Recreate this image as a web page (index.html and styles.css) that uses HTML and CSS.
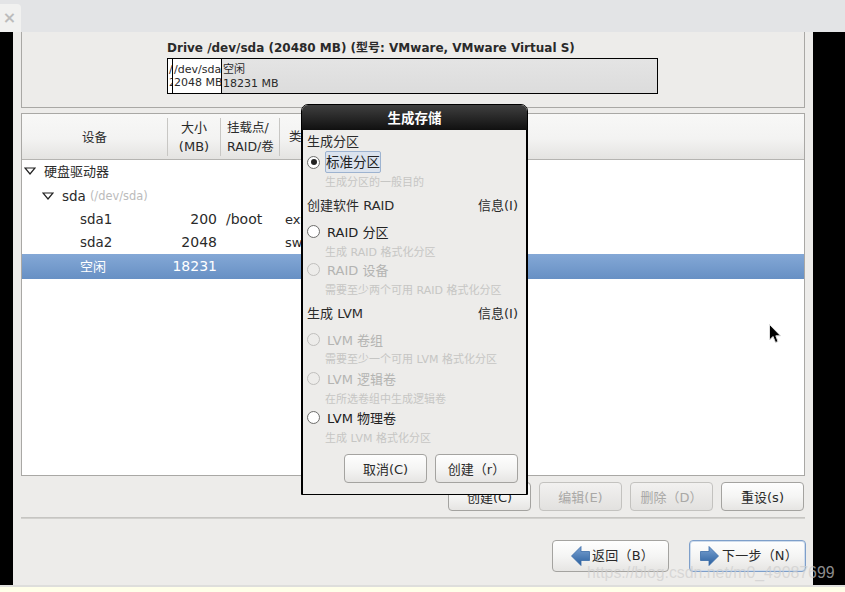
FILE: index.html
```html
<!DOCTYPE html>
<html lang="zh-CN">

<head>
    <meta charset="UTF-8">
    <title>生成存储</title>
    <link rel="stylesheet" href="styles.css">
</head>

<body>
    <div class="topbar">
        <div class="tab">×</div>
    </div>

    <div class="screen">
        <div class="side-left"></div>

        <div class="installer">
            <div class="drive-panel">
                <div class="drive-title">Drive /dev/sda (20480 MB) (型号: VMware, VMware Virtual S)</div>
                <div class="disk-bar">
                    <div class="seg seg-boot">/boot<br>200 MB</div>
                    <div class="seg seg-swap">/dev/sda2<br>2048 MB</div>
                    <div class="seg seg-free">空闲<br>18231 MB</div>
                </div>
            </div>

            <div class="tree-panel">
                <div class="tree-head">
                    <div class="col-title col-device">设备</div>
                    <div class="col-title col-size">大小<br>(MB)</div>
                    <div class="col-title col-mount">挂载点/<br>RAID/卷</div>
                    <div class="col-title col-type">类型</div>
                </div>
                <div class="tree-row">
                    <div class="name level-0">
                        <svg class="expander" width="12" height="8" viewBox="0 0 12 8"><path d="M1 1 H11 L6 7 Z" fill="#fff" stroke="#222" stroke-width="1.2"/></svg>
                        硬盘驱动器
                    </div>
                </div>
                <div class="tree-row">
                    <div class="name level-1">
                        <svg class="expander" width="12" height="8" viewBox="0 0 12 8"><path d="M1 1 H11 L6 7 Z" fill="#fff" stroke="#222" stroke-width="1.2"/></svg>
                        sda <span class="dev-path">(/dev/sda)</span>
                    </div>
                </div>
                <div class="tree-row shift-down">
                    <div class="name level-2">sda1</div>
                    <div class="size">200</div>
                    <div class="mount">/boot</div>
                    <div class="type">ext4</div>
                </div>
                <div class="tree-row">
                    <div class="name level-2">sda2</div>
                    <div class="size">2048</div>
                    <div class="mount"></div>
                    <div class="type">swap</div>
                </div>
                <div class="tree-row selected">
                    <div class="name level-2">空闲</div>
                    <div class="size">18231</div>
                </div>
            </div>

            <div class="action-row">
                <button class="btn">创建(C)</button>
                <button class="btn" disabled>编辑(E)</button>
                <button class="btn" disabled>删除（D）</button>
                <button class="btn">重设(s)</button>
            </div>

            <div class="separator"></div>

            <div class="nav-row">
                <button class="btn nav-btn">
                    <svg width="19" height="20" viewBox="0 0 19 20"><defs><linearGradient id="arrowBack" x1="0" y1="0" x2="0" y2="1"><stop offset="0" stop-color="#7ba3d3"/><stop offset="1" stop-color="#2a5f9e"/></linearGradient></defs><path d="M0.5 10 L10 0.5 V5.5 H18.5 V14.5 H10 V19.5 Z" fill="url(#arrowBack)" stroke="#3a6ca8" stroke-width="0.8"/></svg>
                    返回（B）
                </button>
                <button class="btn nav-btn focused">
                    <svg width="19" height="20" viewBox="0 0 19 20"><defs><linearGradient id="arrowNext" x1="0" y1="0" x2="0" y2="1"><stop offset="0" stop-color="#7ba3d3"/><stop offset="1" stop-color="#2a5f9e"/></linearGradient></defs><path d="M18.5 10 L9 0.5 V5.5 H0.5 V14.5 H9 V19.5 Z" fill="url(#arrowNext)" stroke="#3a6ca8" stroke-width="0.8"/></svg>
                    下一步（N）
                </button>
            </div>
        </div>

        <div class="side-right"></div>
    </div>

    <div class="bottom-strip"></div>

    <!-- 對話框 -->
    <div class="dialog">
        <div class="dialog-title">生成存储</div>
        <div class="dialog-body">
            <div class="group-label first">生成分区</div>
            <div class="option">
                <span class="radio checked"></span>
                <span class="option-text focus-box">标准分区</span>
            </div>
            <div class="hint short">生成分区的一般目的</div>

            <div class="group-label"><span>创建软件 RAID</span><span>信息(I)</span></div>
            <div class="option">
                <span class="radio"></span>
                <span class="option-text">RAID 分区</span>
            </div>
            <div class="hint">生成 RAID 格式化分区</div>
            <div class="option off">
                <span class="radio"></span>
                <span class="option-text">RAID 设备</span>
            </div>
            <div class="hint">需要至少两个可用 RAID 格式化分区</div>

            <div class="group-label"><span>生成 LVM</span><span>信息(I)</span></div>
            <div class="option off">
                <span class="radio"></span>
                <span class="option-text">LVM 卷组</span>
            </div>
            <div class="hint tall">需要至少一个可用 LVM 格式化分区</div>
            <div class="option off">
                <span class="radio"></span>
                <span class="option-text">LVM 逻辑卷</span>
            </div>
            <div class="hint tall low">在所选卷组中生成逻辑卷</div>
            <div class="option">
                <span class="radio"></span>
                <span class="option-text">LVM 物理卷</span>
            </div>
            <div class="hint tall low">生成 LVM 格式化分区</div>

            <div class="dialog-buttons">
                <button class="btn">取消(C)</button>
                <button class="btn">创建（r）</button>
            </div>
        </div>
    </div>

    <svg class="cursor" width="14" height="22" viewBox="0 0 14 22"><path d="M1.5 1.5 V17 L5 13.5 L7.5 19.5 L10 18.5 L7.8 12.8 H12.5 Z" fill="#000" stroke="#ddd" stroke-width="1"/></svg>

    <div class="watermark">https://blog.csdn.net/m0_49087699</div>
</body>

</html>
```

FILE: styles.css
```css
* {
    box-sizing: border-box;
}

body {
    margin: 0;
    width: 845px;
    height: 592px;
    position: relative;
    overflow: hidden;
    display: flex;
    flex-direction: column;
    font-family: "DejaVu Sans", "Noto Sans CJK SC", sans-serif;
    font-size: 13px;
    color: #2a2a2a;
    background-color: #edecea;
}

.topbar {
    height: 32px;
    flex: none;
    background-color: #e3e4e6;
    padding-top: 4px;
}

.tab {
    width: 21px;
    height: 28px;
    background-color: #f1f1f0;
    border-top-right-radius: 4px;
    color: #bcbcbc;
    font-size: 16px;
    font-weight: bold;
    line-height: 28px;
    text-align: center;
    padding-right: 2px;
}

.screen {
    height: 553px;
    flex: none;
    display: flex;
}

.side-left {
    width: 13px;
    background-color: #000;
}

.side-right {
    width: 32px;
    background-color: #000;
}

.installer {
    width: 800px;
    padding: 0 8px;
    background-color: #edecea;
}

.drive-panel {
    height: 76px;
    border: 1px solid #a9a8a5;
    border-top: none;
    padding: 8px 0 0 145px;
}

.drive-title {
    font-size: 12px;
    font-weight: bold;
    line-height: 16px;
    height: 18px;
}

.disk-bar {
    width: 491px;
    height: 36px;
    display: flex;
    border: 1px solid #000;
    font-size: 11px;
    line-height: 13px;
}

.seg {
    overflow: hidden;
    white-space: nowrap;
    border-right: 1px solid #000;
    padding-top: 4px;
}

.seg-boot {
    width: 5px;
    flex: none;
    padding-left: 1px;
    background-color: #fff;
}

.seg-swap {
    width: 49px;
    flex: none;
    padding-left: 1px;
    background-color: #fff;
}

.seg-free {
    flex: 1;
    border-right: none;
    padding-left: 1px;
    line-height: 14px;
    background: linear-gradient(#e4e4e4, #dcdcdc);
}

.tree-panel {
    height: 363px;
    margin-top: 5px;
    border: 1px solid #a9a8a5;
    background-color: #fff;
}

.tree-head {
    height: 46px;
    display: flex;
    align-items: center;
    border-bottom: 1px solid #b5b4b1;
    background: linear-gradient(#f8f8f7 0%, #f3f3f2 55%, #e4e3e1 100%);
}

.col-title {
    height: 38px;
    display: flex;
    align-items: center;
    line-height: 19px;
    font-size: 12.5px;
    border-right: 1px solid #c8c7c4;
}

.col-device {
    width: 146px;
    justify-content: center;
    padding-top: 2px;
}

.col-size {
    width: 53px;
    justify-content: center;
    text-align: center;
    font-size: 13px;
}

.col-mount {
    width: 59px;
    padding-left: 6px;
}

.col-type {
    width: 100px;
    padding-left: 9px;
    border-right: none;
}

.tree-row {
    height: 23.5px;
    display: flex;
    align-items: center;
    white-space: nowrap;
}

.shift-down {
    padding-top: 1px;
}

.name {
    width: 146px;
    flex: none;
    display: flex;
    align-items: center;
}

.level-0 {
    padding-left: 2px;
    padding-bottom: 2px;
}

.level-1 {
    padding-left: 20px;
    padding-top: 2px;
    font-size: 13.5px;
}

.level-2 {
    padding-left: 58px;
    font-size: 13.4px;
}

.expander {
    margin-right: 8px;
}

.dev-path {
    margin-left: 4px;
    font-size: 11.4px;
    color: #bbb;
}

.size {
    width: 53px;
    flex: none;
    font-size: 14px;
    text-align: right;
    padding-right: 4px;
}

.mount {
    width: 59px;
    flex: none;
    font-size: 14px;
    padding-left: 5px;
}

.type {
    padding-left: 5px;
}

.selected {
    height: 25px;
    padding-bottom: 2px;
    color: #fff;
    background: linear-gradient(#84a8d6, #6790c4);
}

.selected .name {
    font-size: 13px;
}

.action-row {
    margin-top: 6px;
    display: flex;
    justify-content: flex-end;
    gap: 8px;
    padding-right: 1px;
}

.btn {
    width: 83px;
    height: 29px;
    padding: 0;
    border: 1px solid #a4a3a0;
    border-radius: 4px;
    background: linear-gradient(#fefefe, #f5f5f4 50%, #e6e5e3);
    font-family: inherit;
    font-size: 13px;
    color: #2a2a2a;
}

.btn:disabled {
    color: #a9a8a6;
    border-color: #c3c2bf;
    background: linear-gradient(#f2f1f0, #e2e1df);
}

.separator {
    height: 2px;
    margin-top: 6px;
    background: linear-gradient(#c0bfbc, #d8d7d4);
}

.nav-row {
    margin-top: 21px;
    margin-right: -1px;
    display: flex;
    justify-content: flex-end;
    gap: 20px;
}

.nav-btn {
    width: 117px;
    height: 32px;
    padding: 0 0 4px 4px;
    display: flex;
    align-items: center;
    justify-content: center;
    gap: 2px;
    letter-spacing: 0.2px;
}

.nav-btn svg {
    margin-top: 4px;
}

.focused {
    padding-left: 3px;
    gap: 3px;
    border-color: #7e9fca;
    box-shadow: inset 0 0 0 1px #cfdcec;
}

.bottom-strip {
    flex: 1;
    border-top: 2px solid #dededc;
    background-color: #ffffe9;
}

.dialog {
    position: absolute;
    left: 301px;
    top: 104px;
    width: 227px;
    height: 391px;
    border: 1px solid #000;
    border-top-left-radius: 7px;
    border-top-right-radius: 7px;
    background-color: #edecea;
    overflow: hidden;
    font-size: 13px;
}

.dialog-title {
    height: 25px;
    background: linear-gradient(#3f3f3f, #101010);
    color: #fff;
    font-size: 13.5px;
    font-weight: bold;
    line-height: 26px;
    text-align: center;
}

.dialog-body {
    padding: 0 8px 0 4px;
    border-left: 1px solid #000;
    border-right: 1px solid #000;
    height: 365px;
}

.group-label {
    height: 28px;
    display: flex;
    justify-content: space-between;
    align-items: center;
    margin-top: 1px;
    margin-bottom: 3px;
}

.group-label.first {
    height: 20px;
    margin-top: 0;
    margin-bottom: 2px;
}

.option {
    height: 20px;
    display: flex;
    align-items: center;
    color: #222;
}

.option.off {
    color: #b4b4b2;
}

.radio {
    width: 13px;
    height: 13px;
    flex: none;
    margin-right: 7px;
    border: 1px solid #6f6f6d;
    border-radius: 50%;
    background: radial-gradient(circle, #fff 60%, #ececec);
    position: relative;
}

.off .radio {
    border-color: #c0bfbd;
    background: #edecea;
}

.checked::after {
    content: "";
    position: absolute;
    left: 2.5px;
    top: 2.5px;
    width: 6px;
    height: 6px;
    border-radius: 50%;
    background-color: #222;
}

.focus-box {
    height: 22px;
    margin-left: -2px;
    font-size: 13.5px;
    line-height: 20px;
    border: 1px solid #9db3d0;
    border-radius: 2px;
    background-color: #dbe3ee;
}

.hint {
    height: 18px;
    padding: 1px 0 0 18px;
    font-size: 11px;
    line-height: 21px;
    color: #c6c6c4;
}

.hint.short {
    height: 17px;
    padding-top: 0;
}

.hint.tall {
    height: 19px;
    padding-top: 1px;
    line-height: 20px;
}

.hint.low {
    padding-top: 2px;
}

.dialog-buttons {
    margin-top: 8px;
    display: flex;
    justify-content: flex-end;
    gap: 8px;
}

.cursor {
    position: absolute;
    left: 768px;
    top: 323px;
}

.watermark {
    position: absolute;
    left: 587px;
    top: 564px;
    font-family: "Liberation Sans", sans-serif;
    font-size: 15.85px;
    line-height: 18px;
    color: rgba(205, 205, 205, 0.7);
    white-space: nowrap;
}
```
